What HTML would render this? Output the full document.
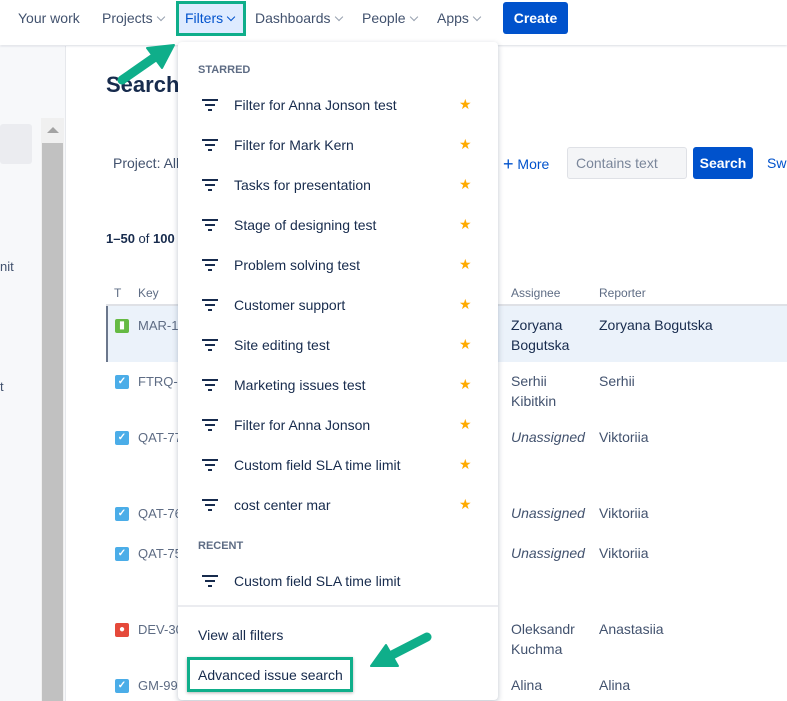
<!DOCTYPE html>
<html><head><meta charset="utf-8"><style>
*{margin:0;padding:0;box-sizing:border-box}
body{width:787px;height:701px;overflow:hidden;position:relative;background:#fff;font-family:"Liberation Sans",sans-serif;color:#172b4d}
.a{position:absolute;white-space:nowrap}
.nav{font-size:14px;color:#42526e;top:10px}
.chev{display:inline-block;width:6px;height:6px;border-right:1.5px solid #97a0af;border-bottom:1.5px solid #97a0af;transform:rotate(45deg);margin-left:5px;position:relative;top:-3px}
.it{font-size:14px;color:#172b4d;left:234px}
.st{position:absolute;left:459px;font-size:14px;color:#ffab00;line-height:14px}
.ic{position:absolute;left:115px;width:14px;height:14px;border-radius:2px;background:#4bade8;color:#fff;font-size:10px;text-align:center;line-height:14px;font-weight:bold}
.key{font-size:13px;color:#5e6c84;left:138px}
.cell{font-size:14px;color:#42526e;line-height:20px}
</style></head><body>
<div class="a" style="left:0;top:46px;width:66px;height:655px;background:#f7f8fa"></div>
<div class="a" style="left:0;top:124px;width:32px;height:40px;background:#ebecf0;border-radius:3px"></div>
<div class="a" style="left:41px;top:118px;width:23px;height:583px;background:#f0f0f0"></div>
<div class="a" style="left:42px;top:143px;width:21px;height:558px;background:#c1c1c1"></div>
<div class="a" style="left:47px;top:127px;width:0;height:0;border-left:6px solid transparent;border-right:6px solid transparent;border-bottom:6px solid #a3a3a3"></div>
<div class="a" style="left:65px;top:46px;width:1px;height:655px;background:#e6e8ec"></div>
<div class="a" style="left:0;top:259px;font-size:13px;color:#42526e">nit</div>
<div class="a" style="left:0;top:379px;font-size:13px;color:#42526e">t</div>
<div class="a" style="left:0;top:0;width:787px;height:45px;background:#fff;box-shadow:0 1px 2px rgba(9,30,66,.15)"></div>
<div class="a nav" style="left:18px">Your work</div>
<div class="a nav" style="left:102px">Projects<span class="chev"></span></div>
<div class="a" style="left:176px;top:1px;width:70px;height:35px;background:#deebff;border:3px solid #0fae8a"></div>
<div class="a nav" style="left:185px;color:#0052cc">Filters<span class="chev" style="border-color:#0052cc"></span></div>
<div class="a nav" style="left:255px">Dashboards<span class="chev"></span></div>
<div class="a nav" style="left:362px">People<span class="chev"></span></div>
<div class="a nav" style="left:437px">Apps<span class="chev"></span></div>
<div class="a" style="left:503px;top:2px;width:65px;height:32px;background:#0052cc;border-radius:3px;color:#fff;font-weight:bold;font-size:14px;text-align:center;line-height:32px">Create</div>
<div class="a" style="left:106px;top:72px;font-size:22px;font-weight:bold;color:#172b4d">Search</div>
<div class="a" style="left:113px;top:155px;font-size:14px;color:#42526e">Project: All</div>
<div class="a" style="left:503px;top:153px;font-size:14px;color:#0052cc"><span style="font-size:18px;position:relative;top:1px">+</span> More</div>
<div class="a" style="left:567px;top:147px;width:120px;height:32px;background:#f4f5f7;border:1px solid #dfe1e6;border-radius:3px;font-size:14px;color:#7a869a;padding:7px 8px">Contains text</div>
<div class="a" style="left:693px;top:147px;width:60px;height:32px;background:#0052cc;border-radius:3px;color:#fff;font-weight:bold;font-size:14px;text-align:center;line-height:32px">Search</div>
<div class="a" style="left:767px;top:155px;font-size:14px;color:#0052cc">Swi</div>
<div class="a" style="left:106px;top:231px;font-size:13px;color:#172b4d"><b>1–50</b> of <b>100</b></div>
<div class="a" style="left:114px;top:286px;font-size:12px;color:#5e6c84">T</div>
<div class="a" style="left:138px;top:286px;font-size:12px;color:#5e6c84">Key</div>
<div class="a" style="left:511px;top:286px;font-size:12px;color:#5e6c84">Assignee</div>
<div class="a" style="left:599px;top:286px;font-size:12px;color:#5e6c84">Reporter</div>
<div class="a" style="left:106px;top:304px;width:681px;height:2px;background:#dfe1e6"></div>
<div class="a" style="left:106px;top:306px;width:681px;height:56px;background:#ebf2fa;border-left:2px solid #6b778c"></div>
<div class="ic" style="top:319px;background:#65ba43">▮</div><div class="a key" style="top:318px">MAR-15</div>
<div class="ic" style="top:375px">✓</div><div class="a key" style="top:374px">FTRQ-14</div>
<div class="ic" style="top:431px">✓</div><div class="a key" style="top:430px">QAT-77</div>
<div class="ic" style="top:507px">✓</div><div class="a key" style="top:506px">QAT-76</div>
<div class="ic" style="top:547px">✓</div><div class="a key" style="top:546px">QAT-75</div>
<div class="ic" style="top:623px;background:#e5493a">●</div><div class="a key" style="top:622px">DEV-30</div>
<div class="ic" style="top:679px">✓</div><div class="a key" style="top:678px">GM-999</div>
<div class="a cell" style="left:511px;top:315px;color:#172b4d">Zoryana<br>Bogutska</div><div class="a cell" style="left:599px;top:315px;color:#172b4d">Zoryana Bogutska</div>
<div class="a cell" style="left:511px;top:371px">Serhii<br>Kibitkin</div><div class="a cell" style="left:599px;top:371px">Serhii</div>
<div class="a cell" style="left:511px;top:427px;font-style:italic">Unassigned</div><div class="a cell" style="left:599px;top:427px">Viktoriia</div>
<div class="a cell" style="left:511px;top:503px;font-style:italic">Unassigned</div><div class="a cell" style="left:599px;top:503px">Viktoriia</div>
<div class="a cell" style="left:511px;top:543px;font-style:italic">Unassigned</div><div class="a cell" style="left:599px;top:543px">Viktoriia</div>
<div class="a cell" style="left:511px;top:619px">Oleksandr<br>Kuchma</div><div class="a cell" style="left:599px;top:619px">Anastasiia</div>
<div class="a cell" style="left:511px;top:675px">Alina</div><div class="a cell" style="left:599px;top:675px">Alina</div>
<div class="a" style="left:178px;top:42px;width:320px;height:658px;background:#fff;border-radius:4px;box-shadow:0 2px 6px rgba(9,30,66,.25)"></div>
<div class="a" style="left:198px;top:64px;font-size:11px;font-weight:bold;color:#5e6c84">STARRED</div>
<div id="items"></div>
<div class="a" style="left:198px;top:540px;font-size:11px;font-weight:bold;color:#5e6c84">RECENT</div>
<div class="a" style="left:178px;top:605px;width:320px;height:2px;background:#ebecf0"></div>
<div class="a it" style="left:198px;top:627px">View all filters</div>
<div class="a" style="left:187px;top:657px;width:166px;height:35px;border:3px solid #0fae8a;box-shadow:0 1px 3px rgba(0,0,0,.3)"></div>
<div class="a it" style="left:198px;top:667px">Advanced issue search</div>
<svg class="a" style="left:0;top:0" width="787" height="701">
<g fill="#0fae8a" stroke="#0fae8a" stroke-linecap="round" stroke-linejoin="round">
<line x1="122" y1="80" x2="155" y2="57" stroke-width="9"/>
<polygon points="174,45 147,48 162,68" stroke-width="2"/>
<line x1="427" y1="637" x2="392" y2="655" stroke-width="9"/>
<polygon points="371,666 398,666 386,645" stroke-width="2"/>
</g></svg>
<script>
var t=["Filter for Anna Jonson test","Filter for Mark Kern","Tasks for presentation","Stage of designing test","Problem solving test","Customer support","Site editing test","Marketing issues test","Filter for Anna Jonson","Custom field SLA time limit","cost center mar"],h="";
function row(y,s,star){return '<svg class="a" style="left:202px;top:'+(y-6)+'px" width="16" height="12"><rect x="0" y="0" width="16" height="2" fill="#172b4d"/><rect x="3" y="5" width="10" height="2" fill="#172b4d"/><rect x="6" y="10" width="4" height="2" fill="#172b4d"/></svg><div class="a it" style="top:'+(y-8)+'px">'+s+'</div>'+(star?'<div class="st" style="top:'+(y-8)+'px">★</div>':'');}
t.forEach(function(s,i){h+=row(105+i*40,s,1)});h+=row(581,"Custom field SLA time limit",0);
document.getElementById("items").innerHTML=h;
</script>
</body></html>
